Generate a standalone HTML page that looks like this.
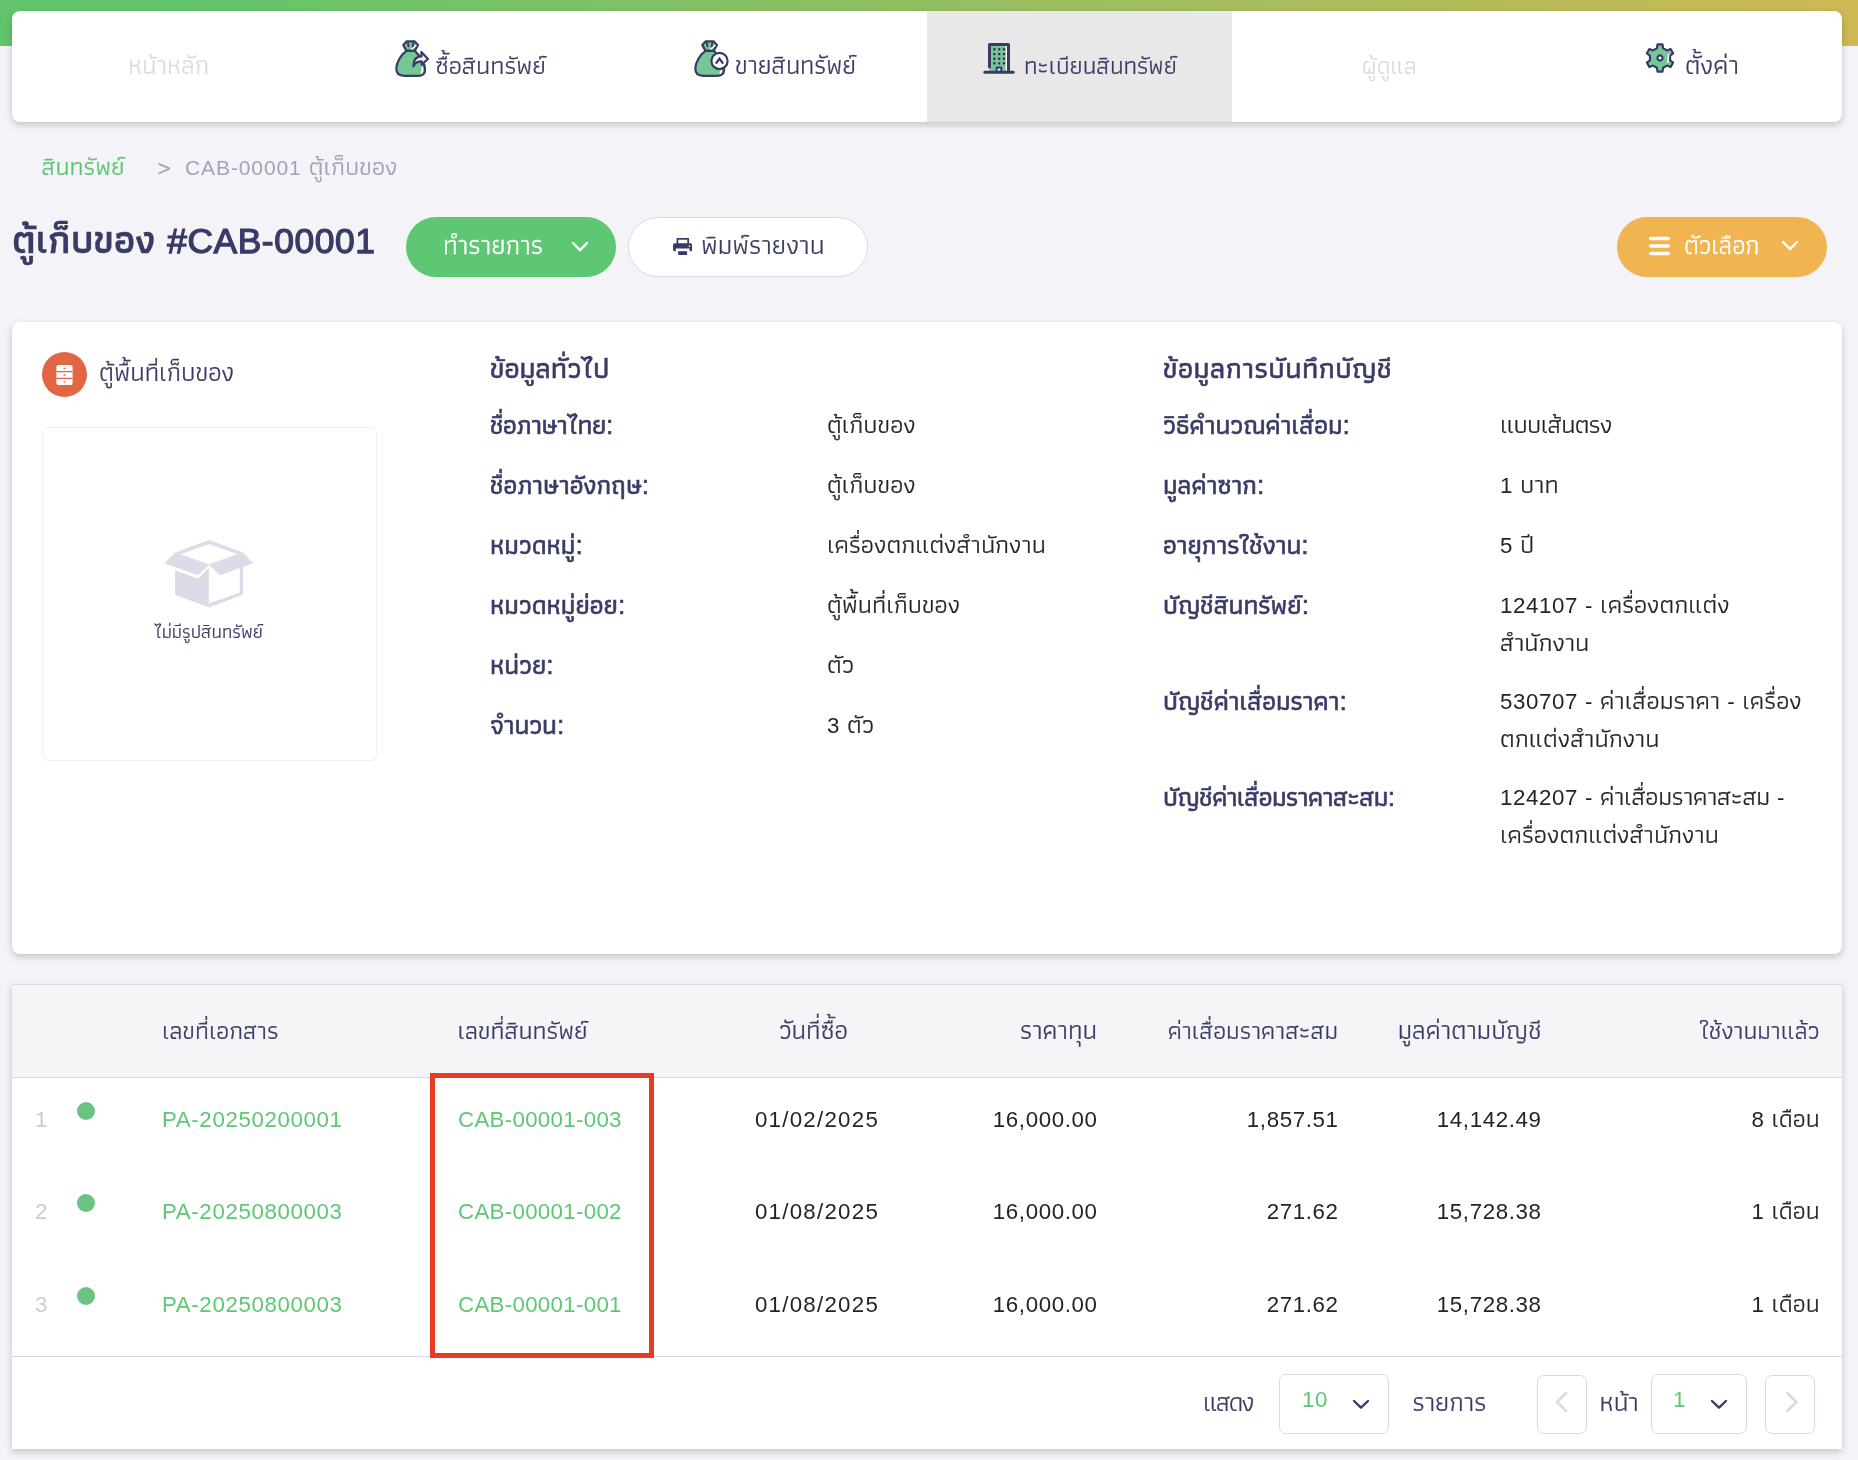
<!DOCTYPE html>
<html lang="th">
<head>
<meta charset="utf-8">
<title>ตู้เก็บของ #CAB-00001</title>
<style>
*{box-sizing:border-box;margin:0;padding:0}
html,body{width:1858px;height:1460px;overflow:hidden}
body{position:relative;background:#f3f3f8;color:#393b66;
  font-family:"Liberation Sans","Athiti","Kanit","Prompt","Noto Sans Thai","Loma",sans-serif;
  font-size:25.5px;line-height:36px;-webkit-font-smoothing:antialiased}
#app{position:absolute;left:0;top:0;width:1858px;height:1460px;overflow:hidden;will-change:transform;-webkit-text-stroke:.22px}
.abs{position:absolute;white-space:nowrap}
.topbar{position:absolute;left:0;top:0;width:1858px;height:46px;background:linear-gradient(90deg,#62c46c 0%,#64c46c 10%,#cdb954 100%)}
.card{position:absolute;background:#fff;border-radius:8px;box-shadow:0 3px 7px rgba(10,10,20,.2)}
/* nav */
.nav{left:12px;top:11px;width:1830px;height:111px;display:flex;overflow:hidden}
.nav .tab{position:relative;flex:0 0 305px;height:111px}
.nav .tab.on{background:#e8e8e8}
.nav .tab span{position:absolute;white-space:nowrap;font-size:24.4px;line-height:36px;top:36.5px}
.nav .tab.dis span{color:#dcdce0}
.nav .tab svg{position:absolute}
/* breadcrumb + title */
.bc{font-size:25.5px;line-height:36px;top:148.3px}
.title{left:12px;top:209.2px;-webkit-text-stroke:.35px;font-weight:600;font-size:39.4px;line-height:60px;word-spacing:.8px}
.title b{font-size:35.4px;font-weight:400;-webkit-text-stroke:1.25px #393b66;letter-spacing:.55px}
.btn{position:absolute;top:217px;height:60px;border-radius:30px;font-size:26.6px;line-height:36px}
.btn span{position:absolute;top:10px;white-space:nowrap}
.btn svg{position:absolute}
.btn.green{left:406px;width:210px;background:#5ec774;color:#fff;-webkit-text-stroke:.3px #fff}
.btn.white{left:628px;width:240px;background:#fff;border:1px solid #d9d9e6}
.btn.orange{left:1617px;width:210px;background:#f0b451;color:#fff;font-size:25.7px;-webkit-text-stroke:.3px #fff}
/* detail card */
.detail{left:12px;top:322px;width:1830px;height:632px}
.h3{font-weight:500;font-size:28.9px;line-height:40px;-webkit-text-stroke:.6px}
.lb{font-weight:500;font-size:26.3px;-webkit-text-stroke:.6px;margin-top:.7px}
.val{color:#22242b}
.en{font-size:22.3px;letter-spacing:.62px;-webkit-text-stroke:0}
/* table card */
.tbl{left:12px;top:984px;width:1830px;height:465px;overflow:hidden;border-radius:0;border-top:1px solid #d9d9e5}
.thead{position:absolute;left:0;top:0;width:1830px;height:93px;background:#f5f5f8;border-bottom:1px solid #d9d9e5}
.tfoot{position:absolute;left:0;top:371px;width:1830px;height:93px;border-top:1px solid #d9d9e5}
.th{position:absolute;white-space:nowrap;font-size:24.4px;top:27px}
.td{position:absolute;white-space:nowrap;font-size:22.3px;letter-spacing:.62px;color:#22242b;-webkit-text-stroke:0}
.td .thai{font-size:25px;line-height:1;letter-spacing:0;-webkit-text-stroke:.22px}
.ft{font-size:24.4px}
.sv{font-size:22.3px;letter-spacing:.62px;color:#5ec774;-webkit-text-stroke:0}
.r{text-align:right}
.lnk{color:#5ec774}
.num{color:#cdcdd0}
.dot{position:absolute;width:18px;height:18px;border-radius:50%;background:#6cc283}
.sel{position:absolute;border:1px solid #d9d9e6;border-radius:7px;background:#fff}
.hl{position:absolute;left:430px;top:1073px;width:224px;height:285px;border:5px solid #e73c21}
</style>
</head>
<body>
<div id="app">
<div class="topbar"></div>

<!-- NAV -->
<div class="card nav">
  <div class="tab dis"><span style="left:116px;font-size:26.2px;top:35.8px">หน้าหลัก</span></div>
  <div class="tab">
    <svg style="left:77px;top:27px" width="38" height="40" viewBox="0 0 38 40">
      <path d="M12.4 12.8 C7.2 16.6 2.3 24.2 2.3 30.8 C2.3 35.8 5.4 37.8 10.2 37.8 L23.6 37.8 C28.4 37.8 31.1 35.4 31.1 31.4 C31.1 26 25.8 18 20.8 12.8 Z" fill="#77c796" stroke="#393b66" stroke-width="2.2" stroke-linejoin="round"/>
      <path d="M28 29.5 C28.8 31.3 28.7 33.6 27.3 35.3" fill="none" stroke="#fff" stroke-width="1.5" stroke-linecap="round"/>
      <path d="M12.4 12.6 L9.3 7.1 L12.7 3.3 L20.5 3.3 L23.9 7.1 L20.8 12.6 Z" fill="#77c796" stroke="#393b66" stroke-width="2.2" stroke-linejoin="round"/>
      <path d="M17.8 11 L22 7.4" fill="none" stroke="#fff" stroke-width="1.4" stroke-linecap="round"/>
      <path d="M13.7 4.4 L14.5 8.2 M19.5 4.4 L18.7 8.2" fill="none" stroke="#393b66" stroke-width="2" stroke-linecap="round"/>
      <path d="M27.4 14 L34 21 L27.7 26.6 L27.7 23.4 C24 23.4 21 25 19.4 28.2 C19.4 22.5 22 18.4 27.4 18.4 Z" fill="#f1f1f3" stroke="#393b66" stroke-width="2.2" stroke-linejoin="round"/>
    </svg>
    <span style="left:118px;font-size:25.5px;top:35.8px">ซื้อสินทรัพย์</span></div>
  <div class="tab">
    <svg style="left:71.3px;top:27px" width="38" height="40" viewBox="0 0 38 40">
      <path d="M12.4 12.8 C7.2 16.6 2.3 24.2 2.3 30.8 C2.3 35.8 5.4 37.8 10.2 37.8 L23.6 37.8 C28.4 37.8 31.1 35.4 31.1 31.4 C31.1 26 25.8 18 20.8 12.8 Z" fill="#77c796" stroke="#393b66" stroke-width="2.2" stroke-linejoin="round"/>
      <path d="M28 29.5 C28.8 31.3 28.7 33.6 27.3 35.3" fill="none" stroke="#fff" stroke-width="1.5" stroke-linecap="round"/>
      <path d="M12.4 12.6 L9.3 7.1 L12.7 3.3 L20.5 3.3 L23.9 7.1 L20.8 12.6 Z" fill="#77c796" stroke="#393b66" stroke-width="2.2" stroke-linejoin="round"/>
      <path d="M17.8 11 L22 7.4" fill="none" stroke="#fff" stroke-width="1.4" stroke-linecap="round"/>
      <path d="M13.7 4.4 L14.5 8.2 M19.5 4.4 L18.7 8.2" fill="none" stroke="#393b66" stroke-width="2" stroke-linecap="round"/>
      <circle cx="26.5" cy="22.9" r="8.1" fill="#fff" stroke="#393b66" stroke-width="2.2"/>
      <path d="M22.9 25.6 L26.5 20.6 L30.1 25.6" fill="none" stroke="#393b66" stroke-width="2.3" stroke-linejoin="miter"/>
    </svg>
    <span style="left:113px;font-size:25.6px;top:35.8px">ขายสินทรัพย์</span></div>
  <div class="tab on">
    <svg style="left:56px;top:31px" width="32" height="32" viewBox="0 0 32 32">
      <rect x="6.5" y="2.5" width="19" height="27" fill="#77c796"/>
      <rect x="22.6" y="4" width="1.4" height="25" fill="#fff"/>
      <path d="M6.5 25 L6.5 2.5 L25.5 2.5 L25.5 29.5" fill="none" stroke="#393b66" stroke-width="3" stroke-linejoin="round" stroke-linecap="round"/>
      <path d="M1.8 30.3 L30.2 30.3" stroke="#393b66" stroke-width="2.9" stroke-linecap="round"/>
      <g fill="#2f2a5c"><rect x="10.3" y="6.2" width="2.2" height="2.2"/><rect x="15.1" y="6.2" width="2.2" height="2.2"/><rect x="19.9" y="6.2" width="2.2" height="2.2"/><rect x="10.3" y="11" width="2.2" height="2.2"/><rect x="15.1" y="11" width="2.2" height="2.2"/><rect x="19.9" y="11" width="2.2" height="2.2"/><rect x="10.3" y="15.6" width="2.2" height="2.2"/><rect x="15.1" y="15.6" width="2.2" height="2.2"/><rect x="19.9" y="15.6" width="2.2" height="2.2"/><rect x="10.3" y="20.2" width="2.2" height="2.2"/><rect x="15.1" y="20.2" width="2.2" height="2.2"/><rect x="19.9" y="20.2" width="2.2" height="2.2"/></g>
      <rect x="13.7" y="25.6" width="4.6" height="4" fill="#fff" stroke="#393b66" stroke-width="2"/>
    </svg>
    <span style="left:97px">ทะเบียนสินทรัพย์</span></div>
  <div class="tab dis"><span style="left:130px">ผู้ดูแล</span></div>
  <div class="tab">
    <svg style="left:105.5px;top:30.3px" width="34" height="34" viewBox="-17 -17 34 34">
      <path d="M-3.10 -9.82 L-2.49 -13.68 L2.49 -13.68 L3.10 -9.82 L6.96 -7.59 L10.60 -8.99 L13.09 -4.69 L10.06 -2.23 L10.06 2.23 L13.09 4.69 L10.60 8.99 L6.96 7.59 L3.10 9.82 L2.49 13.68 L-2.49 13.68 L-3.10 9.82 L-6.96 7.59 L-10.60 8.99 L-13.09 4.69 L-10.06 2.23 L-10.06 -2.23 L-13.09 -4.69 L-10.60 -8.99 L-6.96 -7.59 Z" fill="#77c796" stroke="#393b66" stroke-width="2.2" stroke-linejoin="round"/>
      <path d="M8.6 -3.4 L7.9 4.2" fill="none" stroke="#fff" stroke-width="1.5" stroke-linecap="round"/>
      <circle cx="0" cy="0" r="2.6" fill="#fff" stroke="#393b66" stroke-width="2.1"/>
    </svg>
    <span style="left:148px;font-size:26.6px;top:35.8px">ตั้งค่า</span></div>
</div>

<!-- BREADCRUMB -->
<div class="abs bc" style="left:41.5px;color:#5ec36f;font-size:25.2px">สินทรัพย์</div>
<div class="abs bc" style="left:157.5px;top:150.5px;color:#a2a3b8;font-size:22.5px">&gt;</div>
<div class="abs bc" style="left:185px;color:#a2a3b8"><span class="en" style="font-size:21px;letter-spacing:.9px">CAB-00001</span> ตู้เก็บของ</div>

<!-- TITLE + BUTTONS -->
<h1 class="abs title">ตู้เก็บของ <b>#CAB-00001</b></h1>
<div class="btn green"><span style="left:37px">ทำรายการ</span>
  <svg style="left:165px;top:24px" width="18" height="12" viewBox="0 0 18 12"><path d="M2 2 L9 9.2 L16 2" fill="none" stroke="#fff" stroke-width="2.4" stroke-linecap="round" stroke-linejoin="round"/></svg></div>
<div class="btn white"><span style="left:72px;top:9.3px">พิมพ์รายงาน</span>
  <svg style="left:43.8px;top:19.6px" width="19.4" height="17.5" viewBox="0 0 19.4 17.5">
    <rect x="4.45" y="0.85" width="10.7" height="6" fill="#fff" stroke="#393b66" stroke-width="1.7"/>
    <path d="M0 7.3 Q0 5.3 2 5.3 H17.4 Q19.4 5.3 19.4 7.3 V11.6 Q19.4 13.2 17.9 13.2 H16.6 V10.6 H2.8 V13.2 H1.5 Q0 13.2 0 11.6 Z" fill="#393b66"/>
    <circle cx="16.5" cy="8" r="0.85" fill="#fff"/>
    <rect x="5.2" y="13.2" width="8.9" height="4.1" fill="#393b66"/>
  </svg></div>
<div class="btn orange"><span style="left:67px">ตัวเลือก</span>
  <svg style="left:31px;top:19px" width="23" height="20" viewBox="0 0 23 20"><path d="M2.7 2.5 H20.3 M2.7 10.1 H20.3 M2.7 17.4 H20.3" stroke="#fff" stroke-width="3.5" stroke-linecap="round"/></svg>
  <svg style="left:164px;top:23px" width="18" height="12" viewBox="0 0 18 12"><path d="M2 2 L9 9.2 L16 2" fill="none" stroke="#fff" stroke-width="2.4" stroke-linecap="round" stroke-linejoin="round"/></svg></div>

<!-- DETAIL CARD -->
<div class="card detail">
  <div class="abs" style="left:30px;top:30px;width:45px;height:45px;border-radius:50%;background:#e16643">
    <svg style="position:absolute;left:13px;top:12px" width="20" height="22" viewBox="0 0 20 22">
      <rect x="1.4" y="1" width="16.2" height="20" rx="2" fill="#fff"/>
      <path d="M1.4 7.6 H17.6 M1.4 14.4 H17.6" stroke="#e16643" stroke-width="1.2"/>
      <path d="M9 4.3 H10 M9 11 H10 M9 17.8 H10" stroke="#e16643" stroke-width="1.3" stroke-linecap="round"/>
    </svg>
  </div>
  <div class="abs" style="left:87px;top:31.5px;font-size:25.9px">ตู้พื้นที่เก็บของ</div>
  <div class="abs" style="left:30px;top:105px;width:335px;height:334px;border:1px solid #efeff5;border-radius:7px">
    <svg style="position:absolute;left:87px;top:92px" width="160" height="100" viewBox="0 0 160 100">
      <g fill="#dcdce8">
        <path fill-rule="evenodd" d="M45.1 32.6 L79.1 20.1 L113.1 32.6 L79.1 44.9 Z M50.6 34.2 L79.1 24 L107.4 34.1 L79.1 44.2 Z"/>
        <path d="M79.1 46 L113.1 46 L113.1 74.8 L79.1 87.4 Z"/>
        <path d="M79.1 45 L109.8 45 L109.8 72.4 L79.1 83.6 Z" fill="#fff"/>
        <path d="M45.1 50.3 L68.2 58.7 L78.8 47.4 L78.8 87.4 L45.1 74.8 Z"/>
        <path d="M45.1 32.6 L34.5 43.3 L68.2 55.3 L79.1 44.9 Z"/>
        <path d="M113.1 32.6 L123.2 43.3 L90.1 55.2 L79.1 44.9 Z"/>
      </g>
    </svg>
    <div class="abs" style="left:-1px;width:333px;top:189.3px;text-align:center;font-size:18.7px;line-height:30px">ไม่มีรูปสินทรัพย์</div>
  </div>
  <div class="abs h3" style="left:478px;top:26.2px">ข้อมูลทั่วไป</div>
  <div class="abs lb" style="left:478px;top:84.3px;letter-spacing:-.4px">ชื่อภาษาไทย:</div>
  <div class="abs val" style="left:815px;top:84.3px">ตู้เก็บของ</div>
  <div class="abs lb" style="left:478px;top:144.3px">ชื่อภาษาอังกฤษ:</div>
  <div class="abs val" style="left:815px;top:144.3px">ตู้เก็บของ</div>
  <div class="abs lb" style="left:478px;top:204.3px">หมวดหมู่:</div>
  <div class="abs val" style="left:815px;top:204.3px">เครื่องตกแต่งสำนักงาน</div>
  <div class="abs lb" style="left:478px;top:264.3px">หมวดหมู่ย่อย:</div>
  <div class="abs val" style="left:815px;top:264.3px">ตู้พื้นที่เก็บของ</div>
  <div class="abs lb" style="left:478px;top:324.3px">หน่วย:</div>
  <div class="abs val" style="left:815px;top:324.3px">ตัว</div>
  <div class="abs lb" style="left:478px;top:384.3px">จำนวน:</div>
  <div class="abs val" style="left:815px;top:384.3px"><span class="en">3</span> ตัว</div>
  <div class="abs h3" style="left:1151px;top:26.2px;letter-spacing:.45px">ข้อมูลการบันทึกบัญชี</div>
  <div class="abs lb" style="left:1151px;top:84.3px">วิธีคำนวณค่าเสื่อม:</div>
  <div class="abs val" style="left:1488px;top:84.3px;letter-spacing:-.65px">แบบเส้นตรง</div>
  <div class="abs lb" style="left:1151px;top:144.3px">มูลค่าซาก:</div>
  <div class="abs val" style="left:1488px;top:144.3px"><span class="en">1</span> บาท</div>
  <div class="abs lb" style="left:1151px;top:204.3px">อายุการใช้งาน:</div>
  <div class="abs val" style="left:1488px;top:204.3px"><span class="en">5</span> ปี</div>
  <div class="abs lb" style="left:1151px;top:264.3px">บัญชีสินทรัพย์:</div>
  <div class="abs val" style="left:1488px;top:264.3px"><span class="en">124107 -</span> เครื่องตกแต่ง<br>สำนักงาน</div>
  <div class="abs lb" style="left:1151px;top:360.3px">บัญชีค่าเสื่อมราคา:</div>
  <div class="abs val" style="left:1488px;top:360.3px"><span class="en">530707 -</span> ค่าเสื่อมราคา <span class="en">-</span> เครื่อง<br>ตกแต่งสำนักงาน</div>
  <div class="abs lb" style="left:1151px;top:456.3px;letter-spacing:-.5px">บัญชีค่าเสื่อมราคาสะสม:</div>
  <div class="abs val" style="left:1488px;top:456.3px"><span class="en">124207 -</span> <span style="letter-spacing:-.3px">ค่าเสื่อมราคาสะสม</span> <span class="en">-</span><br>เครื่องตกแต่งสำนักงาน</div>
</div>

<!-- TABLE CARD -->
<div class="card tbl">
  <div class="thead">
    <div class="th" style="left:150px;font-size:25.1px">เลขที่เอกสาร</div>
    <div class="th" style="left:445.5px;font-size:25.2px">เลขที่สินทรัพย์</div>
    <div class="th" style="left:701.5px;width:200px;text-align:center;font-size:26.1px">วันที่ซื้อ</div>
    <div class="th r" style="right:745px;font-size:26.2px">ราคาทุน</div>
    <div class="th r" style="right:504px;font-size:24.95px">ค่าเสื่อมราคาสะสม</div>
    <div class="th r" style="right:300.5px;font-size:26.35px">มูลค่าตามบัญชี</div>
    <div class="th r" style="right:22.5px;font-size:24.9px">ใช้งานมาแล้ว</div>
  </div>
  <div class="td num" style="left:23px;top:116.5px">1</div>
  <div class="dot" style="left:65px;top:117px"></div>
  <div class="td lnk" style="left:150px;top:116.5px">PA-20250200001</div>
  <div class="td lnk" style="left:446px;top:116.5px;letter-spacing:.3px">CAB-00001-003</div>
  <div class="td" style="left:705px;width:200px;text-align:center;top:116.5px;letter-spacing:1.25px">01/02/2025</div>
  <div class="td r" style="right:744.4px;top:116.5px">16,000.00</div>
  <div class="td r" style="right:503.4px;top:116.5px">1,857.51</div>
  <div class="td r" style="right:300.4px;top:116.5px">14,142.49</div>
  <div class="td r" style="right:22.4px;top:116.5px">8 <span class="thai">เดือน</span></div>
  <div class="td num" style="left:23px;top:208.5px">2</div>
  <div class="dot" style="left:65px;top:209px"></div>
  <div class="td lnk" style="left:150px;top:208.5px">PA-20250800003</div>
  <div class="td lnk" style="left:446px;top:208.5px;letter-spacing:.3px">CAB-00001-002</div>
  <div class="td" style="left:705px;width:200px;text-align:center;top:208.5px;letter-spacing:1.25px">01/08/2025</div>
  <div class="td r" style="right:744.4px;top:208.5px">16,000.00</div>
  <div class="td r" style="right:503.4px;top:208.5px">271.62</div>
  <div class="td r" style="right:300.4px;top:208.5px">15,728.38</div>
  <div class="td r" style="right:22.4px;top:208.5px">1 <span class="thai">เดือน</span></div>
  <div class="td num" style="left:23px;top:301.5px">3</div>
  <div class="dot" style="left:65px;top:302px"></div>
  <div class="td lnk" style="left:150px;top:301.5px">PA-20250800003</div>
  <div class="td lnk" style="left:446px;top:301.5px;letter-spacing:.3px">CAB-00001-001</div>
  <div class="td" style="left:705px;width:200px;text-align:center;top:301.5px;letter-spacing:1.25px">01/08/2025</div>
  <div class="td r" style="right:744.4px;top:301.5px">16,000.00</div>
  <div class="td r" style="right:503.4px;top:301.5px">271.62</div>
  <div class="td r" style="right:300.4px;top:301.5px">15,728.38</div>
  <div class="td r" style="right:22.4px;top:301.5px">1 <span class="thai">เดือน</span></div>
  <div class="tfoot">
    <div class="abs ft" style="left:1191px;top:26.8px;font-size:26px;letter-spacing:-1.6px">แสดง</div>
    <div class="sel" style="left:1267px;top:17px;width:110px;height:60px"><span class="abs sv" style="left:22px;top:7px">10</span>
      <svg style="position:absolute;left:72px;top:24px" width="18" height="11" viewBox="0 0 18 11"><path d="M2 2 L9 8.6 L16 2" fill="none" stroke="#393b66" stroke-width="2.4" stroke-linecap="round" stroke-linejoin="round"/></svg></div>
    <div class="abs ft" style="left:1400.5px;top:26.8px;font-size:26.3px">รายการ</div>
    <div class="sel" style="left:1525px;top:18px;width:50px;height:59px">
      <svg style="position:absolute;left:15.5px;top:15px" width="16" height="24" viewBox="0 0 16 24"><path d="M12 2.2 L3 11 L12 19.8" fill="none" stroke="#dadae6" stroke-width="2.8" stroke-linecap="round" stroke-linejoin="round"/></svg></div>
    <div class="abs ft" style="left:1587.5px;top:26.8px;font-size:26.4px">หน้า</div>
    <div class="sel" style="left:1639px;top:17px;width:96px;height:60px"><span class="abs sv" style="left:21px;top:7px">1</span>
      <svg style="position:absolute;left:58px;top:24px" width="18" height="11" viewBox="0 0 18 11"><path d="M2 2 L9 8.6 L16 2" fill="none" stroke="#393b66" stroke-width="2.4" stroke-linecap="round" stroke-linejoin="round"/></svg></div>
    <div class="sel" style="left:1753px;top:18px;width:50px;height:59px">
      <svg style="position:absolute;left:17.5px;top:15px" width="16" height="24" viewBox="0 0 16 24"><path d="M3.5 2.2 L12.5 11 L3.5 19.8" fill="none" stroke="#dadae6" stroke-width="2.8" stroke-linecap="round" stroke-linejoin="round"/></svg></div>
  </div>
</div>
<div class="hl"></div>
</div>
</body>
</html>
